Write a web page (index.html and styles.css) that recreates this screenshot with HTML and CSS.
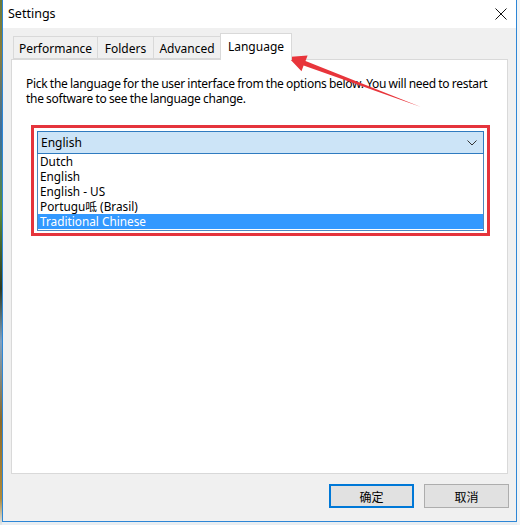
FILE: index.html
```html
<!DOCTYPE html>
<html>
<head>
<meta charset="utf-8">
<link rel="stylesheet" href="styles.css">
</head>
<body>
<div class="desk">
  <div class="strip-left"></div>
  <div class="window">
    <div class="titlebar">
      <span class="title">Settings</span>
      <svg class="close" width="12" height="12" viewBox="0 0 12 12"><path d="M0.5 0.5 L11.5 11.5 M11.5 0.5 L0.5 11.5" stroke="#111" stroke-width="1" fill="none"/></svg>
    </div>
    <div class="client">
      <div class="tabs">
        <div class="tab t-perf">Performance</div>
        <div class="tab t-fold">Folders</div>
        <div class="tab t-adv">Advanced</div>
        <div class="tab active t-lang">Language</div>
      </div>
      <div class="panel">
        <p class="intro">Pick the language for the user interface from the options below.  You will need to restart the software to see the language change.</p>
        <div class="redbox">
          <div class="combo">
            <span>English</span>
            <svg class="chev" width="10" height="6" viewBox="0 0 10 6"><path d="M0.5 0.5 L5 5 L9.5 0.5" stroke="#333" stroke-width="1" fill="none"/></svg>
          </div>
          <ul class="list">
            <li>Dutch</li>
            <li>English</li>
            <li>English - US</li>
            <li>Portugu呧 (Brasil)</li>
            <li class="sel">Traditional Chinese</li>
          </ul>
        </div>
      </div>
      <div class="footer">
        <button class="btn primary">确定</button>
        <button class="btn">取消</button>
      </div>
    </div>
  </div>
  <div class="strip-right"></div>
</div>
<svg class="arrow" width="520" height="525" viewBox="0 0 520 525"><polygon points="288,57 307.6,55.4 305.5,61 421,107 303.6,65.6 301.5,71.2" fill="#e8353b"/></svg>
</body>
</html>
```
FILE: styles.css
```css
html, body { margin: 0; padding: 0; }
body {
  width: 520px;
  height: 525px;
  overflow: hidden;
  position: relative;
  font-family: "Noto Sans", "Noto Sans CJK SC", sans-serif;
  font-size: 12px;
  color: #000;
  background: #e9eef2;
}
.desk { display: flex; height: 525px; }
.strip-left {
  width: 2px;
  background: linear-gradient(to bottom, #6b7a3a 0%, #8a7d3c 10%, #3c6e9e 25%, #5a8a3a 40%, #2e3a22 55%, #7fa0c0 65%, #8c6a2a 80%, #b08a3a 95%, #dfe8ef 100%);
}
.strip-right { width: 3px; background: #f2f4f5; }
.window {
  width: 513px;
  height: 521px;
  border: 1px solid #2d86d6;
  border-top: none;
  display: flex;
  flex-direction: column;
  background: #f0f0f0;
}
.titlebar {
  height: 28px;
  background: #fff;
  display: flex;
  align-items: center;
  justify-content: space-between;
  padding: 0 8px 0 5px;
  flex: none;
}
.title { font-size: 12.5px; position: relative; top: -1px; }
.close { margin-right: 1px; }
.client { flex: 1; display: flex; flex-direction: column; }
.tabs {
  height: 27px;
  margin-top: 5px;
  padding-left: 10px;
  display: flex;
  align-items: flex-end;
  position: relative;
  z-index: 1;
}
.tab {
  height: 23px;
  box-sizing: border-box;
  border: 1px solid #d9d9d9;
  border-right: none;
  background: #f0f0f0;
  display: flex;
  align-items: center;
  justify-content: center;
  margin-bottom: 1px;
  padding-top: 1px;
  font-size: 12px;
}
.t-perf { width: 84px; }
.t-fold { width: 56px; }
.t-adv { width: 67px; border-right: none; }
.tab.active {
  width: 72px;
  height: 27px;
  background: #fff;
  border-right: 1px solid #d9d9d9;
  border-bottom: none;
  margin-bottom: 0;
  padding-top: 0;
  padding-bottom: 1px;
}
.panel {
  margin: -1px 8px 0 8px;
  height: 415px;
  box-sizing: border-box;
  background: #fff;
  border: 1px solid #d9d9d9;
  padding: 16px 8px 0 14px;
}
.intro {
  margin: 0;
  line-height: 15px;
  font-size: 12px;
  letter-spacing: -0.28px;
  word-spacing: -0.4px;
}
.redbox {
  margin: 19px 0 0 5px;
  width: 459px;
  box-sizing: border-box;
  border: 3px solid #e5343c;
  padding: 3px 3px 2px 3px;
}
.combo {
  height: 23px;
  box-sizing: border-box;
  border: 1px solid #2f7bc0;
  background: #cce4f7;
  display: flex;
  align-items: center;
  justify-content: space-between;
  padding: 0 6px 0 3px;
}
.list {
  list-style: none;
  margin: 0;
  padding: 0 0 1px 0;
  border: 1px solid #4d88bf;
  border-top: none;
}
.list li {
  height: 15px;
  line-height: 15px;
  padding-left: 2px;
  font-size: 11.8px;
  overflow: hidden;
}
.list li.sel { background: #3399ff; color: #fff; }
.footer {
  display: flex;
  justify-content: flex-end;
  gap: 10px;
  padding: 10px 7px 0 0;
}
.btn {
  width: 85px;
  height: 24px;
  box-sizing: border-box;
  background: #e1e1e1;
  border: 1px solid #adadad;
  font-family: "Noto Sans CJK SC", sans-serif;
  font-size: 12px;
  padding: 0;
  color: #000;
}
.btn.primary { border: 2px solid #0078d7; }
.arrow { position: absolute; left: 0; top: 0; pointer-events: none; }
```
